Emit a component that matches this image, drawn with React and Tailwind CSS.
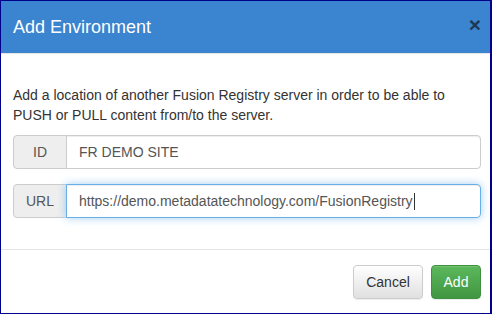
import React from 'react';

const InputGroup = ({ label, value, focused }) => {
  return (
    <div className="flex h-[34px] text-[14px]">
      <div className="w-[54px] flex items-center justify-center bg-[#eeeeee] border border-[#cccccc] rounded-l-[4px] text-[#555555]">
        {label}
      </div>
      <div
        className={`flex-1 flex items-center pl-3 -ml-px rounded-r-[4px] text-[#555555] border ${
          focused
            ? 'border-[#66afe9] shadow-[inset_0_1px_1px_rgba(0,0,0,0.075),0_0_8px_rgba(102,175,233,0.6)] relative'
            : 'border-[#cccccc] shadow-[inset_0_1px_1px_rgba(0,0,0,0.075)]'
        }`}
      >
        <span>{value}</span>
        {focused && <span className="inline-block w-px h-[17px] bg-[#333333] ml-px"></span>}
      </div>
    </div>
  );
};

const App = () => {
  return (
    <div className="w-[492px] h-[314px] bg-white border border-r-2 border-[#00008b] flex flex-col font-['Liberation_Sans',Arial,sans-serif]">
      <div className="h-[53px] shrink-0 bg-[#3a84d0] border-b border-[#e5e5e5] flex items-center justify-between pl-3 pr-[9px]">
        <h4 className="text-[18px] text-white leading-none pb-px">Add Environment</h4>
        <span className="text-[21px] font-bold leading-none text-[#1f3753] pb-[5px]">×</span>
      </div>

      <div className="flex-1 pl-3 pr-[9px] pt-[31px]">
        <p className="text-[14px] leading-5 text-[#333333]">
          Add a location of another Fusion Registry server in order to be able to PUSH or PULL content from/to the server.
        </p>
        <div className="mt-[10px]">
          <InputGroup label="ID" value="FR DEMO SITE" />
        </div>
        <div className="mt-[15px]">
          <InputGroup label="URL" value="https://demo.metadatatechnology.com/FusionRegistry" focused />
        </div>
      </div>

      <div className="h-[64px] shrink-0 border-t border-[#e5e5e5] flex justify-end items-start gap-2 pt-[15px] pr-[9px]">
        <button className="h-[34px] w-[70px] rounded-[4px] border border-[#cccccc] bg-gradient-to-b from-white to-[#e0e0e0] text-[14px] text-[#333333] shadow-[inset_0_1px_0_rgba(255,255,255,0.15),0_1px_1px_rgba(0,0,0,0.075)]">
          Cancel
        </button>
        <button className="h-[34px] w-[50px] rounded-[4px] border border-[#3e8f3e] bg-gradient-to-b from-[#5cb85c] to-[#419641] text-[14px] text-white shadow-[inset_0_1px_0_rgba(255,255,255,0.15),0_1px_1px_rgba(0,0,0,0.075)]">
          Add
        </button>
      </div>
    </div>
  );
};

export default App;
